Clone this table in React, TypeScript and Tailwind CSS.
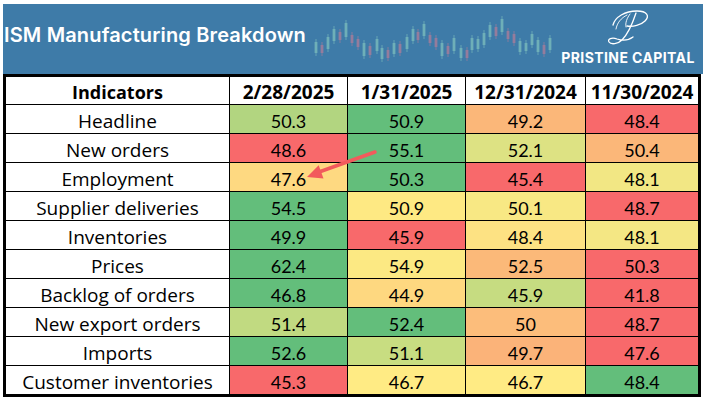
import React from "react";

const G = "#63be7b";
const R = "#f8696b";

type Row = { name: string; cells: [string, string][] };

const rows: Row[] = [
  { name: "Headline", cells: [["50.3", "#b2d580"], ["50.9", G], ["49.2", "#fbb779"], ["48.4", R]] },
  { name: "New orders", cells: [["48.6", R], ["55.1", G], ["52.1", "#dde283"], ["50.4", "#fbb779"]] },
  { name: "Employment", cells: [["47.6", "#fed981"], ["50.3", G], ["45.4", R], ["48.1", "#f2e784"]] },
  { name: "Supplier deliveries", cells: [["54.5", G], ["50.9", "#fee983"], ["50.1", "#f8e884"], ["48.7", R]] },
  { name: "Inventories", cells: [["49.9", G], ["45.9", R], ["48.4", "#fde283"], ["48.1", "#f4e784"]] },
  { name: "Prices", cells: [["62.4", G], ["54.9", "#fce983"], ["52.5", "#fbb979"], ["50.3", R]] },
  { name: "Backlog of orders", cells: [["46.8", G], ["44.9", "#fed880"], ["45.9", "#c6dc81"], ["41.8", R]] },
  { name: "New export orders", cells: [["51.4", "#c1da81"], ["52.4", G], ["50", "#fcbd7b"], ["48.7", R]] },
  { name: "Imports", cells: [["52.6", G], ["51.1", "#c8dd81"], ["49.7", "#fbb379"], ["47.6", R]] },
  { name: "Customer inventories", cells: [["45.3", R], ["46.7", "#ffeb84"], ["46.7", "#ffeb84"], ["48.4", G]] },
];

const candles: [number, number, number, "t" | "p"][] = [
  [316, 42, 53, "t"], [322, 45, 53, "p"], [328, 37, 49, "t"], [334, 29, 41, "t"], [340, 32, 40, "p"],
  [346, 23, 37, "t"], [352, 35, 43, "p"], [358, 39, 47, "p"], [364, 43, 56, "t"], [370, 46, 55, "p"],
  [377, 39, 51, "t"], [382, 48, 59, "t"], [388, 50, 58, "p"], [394, 43, 54, "t"], [400, 44, 53, "p"],
  [407, 37, 49, "t"], [413, 29, 41, "t"], [418, 32, 40, "p"], [424, 24, 36, "t"], [430, 35, 43, "p"],
  [436, 38, 47, "p"], [442, 43, 56, "t"], [448, 46, 54, "p"], [454, 38, 51, "t"], [461, 48, 58, "t"],
  [467, 50, 58, "p"], [472, 38, 50, "t"], [478, 39, 49, "t"], [484, 33, 45, "t"], [490, 25, 37, "t"],
  [496, 27, 36, "p"], [502, 19, 32, "t"], [508, 31, 39, "p"], [514, 34, 43, "p"], [520, 41, 52, "t"],
  [526, 43, 51, "t"], [532, 34, 45, "t"], [538, 40, 52, "t"], [544, 45, 54, "p"], [550, 38, 50, "t"],
];

function Candles() {
  const ox = 312;
  const oy = 4;
  return (
    <svg width="246" height="70" viewBox="0 0 246 70" className="shrink-0">
      {candles.map(([x, t, b, c], i) => {
        const col = c === "t" ? "#8fd3c4" : "#d07e95";
        return (
          <g key={i} opacity={0.6}>
            <line x1={x - ox} x2={x - ox} y1={t - oy - 3} y2={b - oy + 3} stroke={col} strokeWidth={0.8} />
            <rect x={x - ox - 1.4} y={t - oy} width={2.8} height={b - t} fill={col} />
          </g>
        );
      })}
    </svg>
  );
}

function ScriptP() {
  return (
    <svg width="50" height="38" viewBox="0 0 50 38" fill="none" stroke="white" strokeLinecap="round">
      <path d="M10 17 C 12 9, 22 3, 34 3 C 44 3, 47 8, 42 13 C 38 17, 30 19, 24 18" strokeWidth={1.3} />
      <path d="M33 5 C 30 14, 25 26, 19 32 C 15 36, 8 37, 6 34 C 4 31, 9 29, 14 31 C 20 33, 26 32, 30 29" strokeWidth={1.3} />
      <path d="M27 6 C 24 10, 22 15, 23 19" strokeWidth={0.9} />
      <path d="M13 21 C 14 15, 18 10, 24 7" strokeWidth={0.9} />
    </svg>
  );
}

const labelFont = { fontFamily: "'Open Sans', 'Noto Sans', sans-serif" };
const numFont = { fontFamily: "Lato, 'Open Sans', sans-serif" };

export default function App() {
  return (
    <div className="w-[706px] h-[400px] bg-white overflow-hidden relative">
      <div className="pt-[4px] px-[3px]">
        <div className="h-[70px] w-[700px] bg-[#3e7ba8] flex items-center">
          <div
            className="text-white text-[20px] font-semibold tracking-[0.15px] pl-[1px] w-[309px] shrink-0 -mt-[8px] whitespace-nowrap"
            style={{ fontFamily: "Inter, 'Noto Sans', sans-serif" }}
          >
            ISM Manufacturing Breakdown
          </div>
          <Candles />
          <div className="flex flex-col items-center w-[140px] shrink-0 -mt-[6px]">
            <ScriptP />
            <div
              className="text-white text-[14px] font-bold tracking-[0.4px] leading-none mt-[5px] whitespace-nowrap"
              style={{ fontFamily: "Inter, 'Noto Sans', sans-serif" }}
            >
              PRISTINE CAPITAL
            </div>
          </div>
        </div>
      </div>
      <div className="px-[3px]">
        <div className="w-[698px] border-[3px] border-black bg-black">
          <div className="grid grid-cols-[223px_117px_117px_119px_1fr] gap-px text-black">
            <div className="bg-white h-[27px] flex items-center justify-center font-bold text-[18px] pt-[3px]" style={labelFont}>
              Indicators
            </div>
            {["2/28/2025", "1/31/2025", "12/31/2024", "11/30/2024"].map((d) => (
              <div
                key={d}
                className="bg-white h-[27px] flex items-center justify-center font-bold text-[19px] pt-[3px] whitespace-nowrap"
                style={labelFont}
              >
                {d}
              </div>
            ))}
            {rows.map((r) => (
              <React.Fragment key={r.name}>
                <div className="bg-white h-[28px] flex items-center justify-center text-[19px] pt-[4px]" style={labelFont}>
                  {r.name}
                </div>
                {r.cells.map(([v, c], i) => (
                  <div
                    key={i}
                    className="h-[28px] flex items-center justify-center text-[18px] pt-[5px]"
                    style={{ backgroundColor: c, ...numFont }}
                  >
                    {v}
                  </div>
                ))}
              </React.Fragment>
            ))}
          </div>
        </div>
      </div>
      <svg className="absolute left-0 top-0 pointer-events-none" width="706" height="400">
        <line x1="375" y1="152" x2="319" y2="172" stroke="#f25a5c" strokeWidth="3.5" strokeLinecap="round" />
        <polygon points="307,177 318.7,165.2 323.5,178.4" fill="#f25a5c" />
      </svg>
    </div>
  );
}
